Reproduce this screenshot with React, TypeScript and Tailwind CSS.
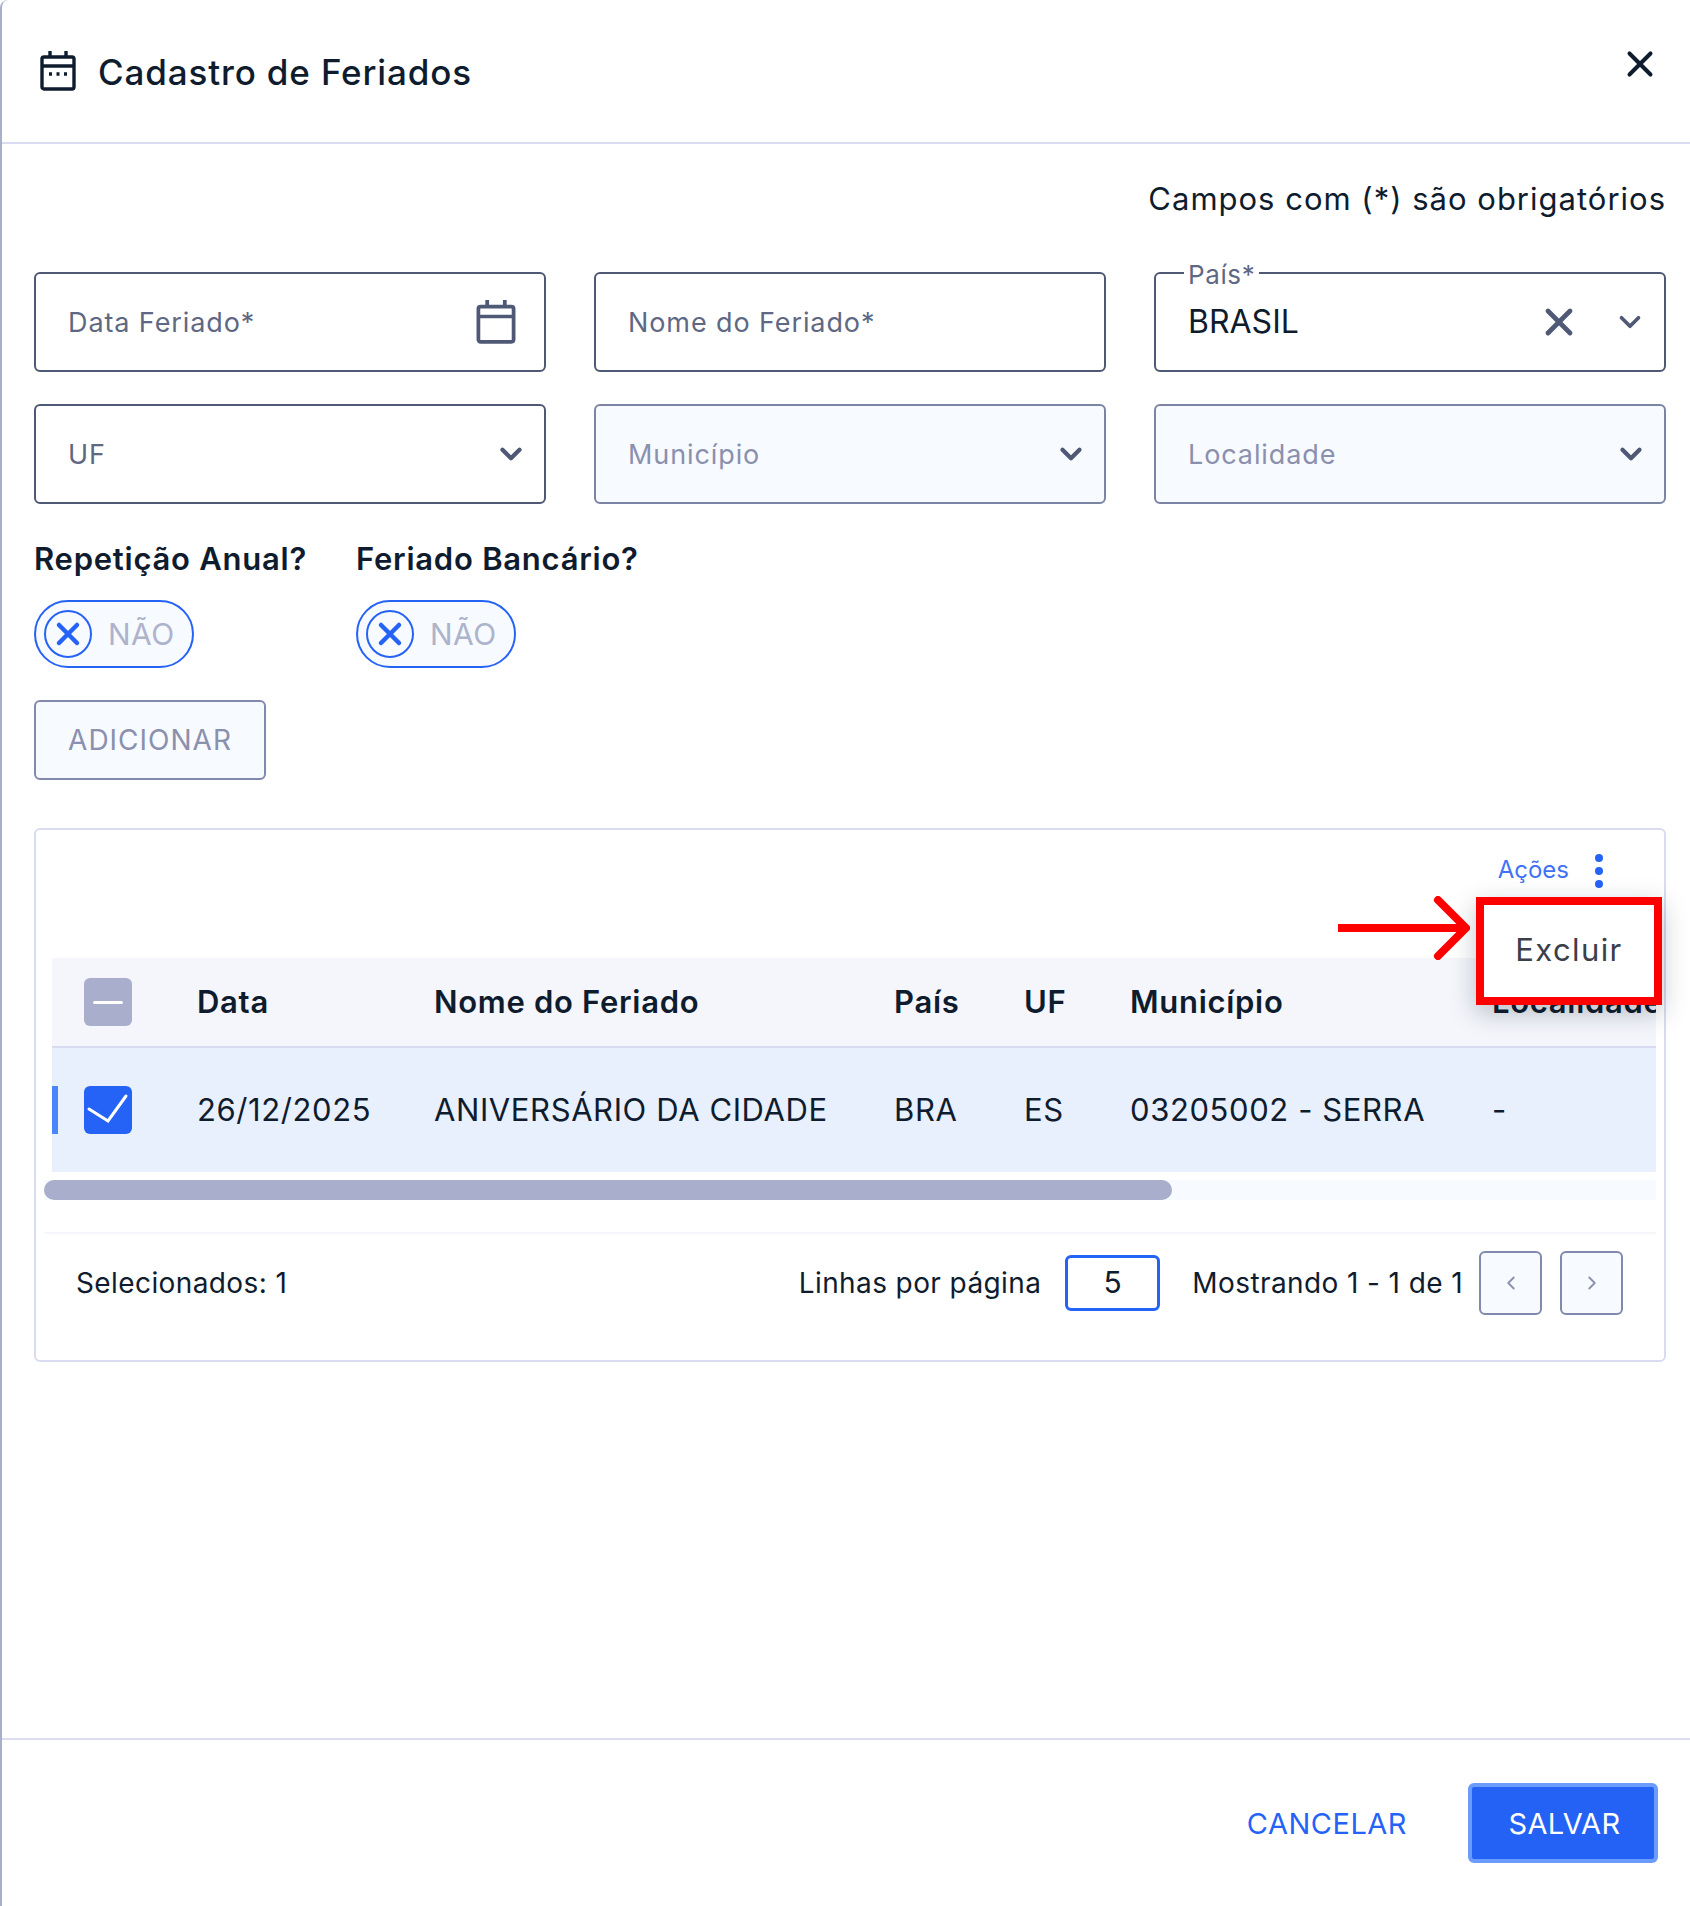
import React from "react";
import { ChevronDown, ChevronLeft, ChevronRight, X } from "lucide-react";

const FONT = "font-['Inter',sans-serif]";

function CalendarIcon({ className, dots }: { className?: string; dots?: boolean }) {
  return (
    <svg viewBox="0 0 36 40" fill="none" stroke="currentColor" strokeWidth="3.4" className={className}>
      <rect x="2" y="6" width="32" height="32" rx="2" />
      <path d="M2 15h32M10 0v6M26 0v6" />
      {dots && <path d="M9 23h3M16.5 23h3M24 23h3" />}
    </svg>
  );
}

function Field({ label, disabled, icon }: { label: string; disabled?: boolean; icon?: React.ReactNode }) {
  return (
    <div
      className={`flex h-[100px] items-center justify-between rounded-md border-2 pl-[32px] pr-[20px] text-[27px] tracking-[0.9px] ${
        disabled
          ? "border-[#7c84a5] bg-[#f7faff] text-[#8a90ad]"
          : "border-[#4f5875] bg-white text-[#5f6883]"
      }`}
    >
      <span className="mt-[2px]">{label}</span>
      {icon}
    </div>
  );
}

function Chevron() {
  return <ChevronDown strokeWidth={3} className="h-[34px] w-[34px] -mr-[4px] text-[#4f5875]" />;
}

function Toggle() {
  return (
    <div className="flex h-[68px] w-[160px] items-center rounded-[34px] border-2 border-[#2563f6] bg-[#f7faff] pl-[8px]">
      <div className="flex h-[48px] w-[48px] items-center justify-center rounded-full border-2 border-[#2563f6]">
        <X strokeWidth={3} className="h-[36px] w-[36px] text-[#2563f6]" />
      </div>
      <span className="ml-[16px] text-[30px] tracking-[0.5px] text-[#aeb3cc]">NÃO</span>
    </div>
  );
}

function PageButton({ children }: { children: React.ReactNode }) {
  return (
    <div className="flex h-[64px] w-[63px] items-center justify-center rounded-md border-2 border-[#8189ac] bg-[#f7faff] text-[#8a90ad]">
      {children}
    </div>
  );
}

const columns = [
  { title: "Data", value: "26/12/2025", width: "w-[237px]" },
  { title: "Nome do Feriado", value: "ANIVERSÁRIO DA CIDADE", width: "w-[460px]" },
  { title: "País", value: "BRA", width: "w-[130px]" },
  { title: "UF", value: "ES", width: "w-[106px]" },
  { title: "Município", value: "03205002 - SERRA", width: "w-[362px]" },
  { title: "Localidade", value: "-", width: "w-[164px]" },
];

export default function App() {
  return (
    <div className={`${FONT} flex h-[1906px] w-[1690px] flex-col overflow-hidden rounded-tl-lg border-l-2 border-[#a8aecb] bg-white text-[#0f1c2e]`}>
      <header className="flex h-[144px] shrink-0 items-center justify-between border-b-2 border-[#d9dcf0] pl-[38px] pr-[29px]">
        <div className="flex items-center gap-[22px]">
          <CalendarIcon dots className="h-[40px] w-[36px]" />
          <h1 className="mt-[2px] text-[35px] font-medium tracking-[0.85px]">Cadastro de Feriados</h1>
        </div>
        <X strokeWidth={2.3} className="mb-[14px] h-[42px] w-[42px]" />
      </header>

      <main className="flex-1 pl-[32px] pr-[24px]">
        <p className="mt-[35px] text-right text-[31px] leading-[40px] tracking-[1px]">Campos com (*) são obrigatórios</p>

        <div className="mt-[53px] grid grid-cols-3 gap-x-[48px] gap-y-[32px]">
          <Field label="Data Feriado*" icon={<CalendarIcon className="mr-[8px] h-[44px] w-[40px] text-[#4f5875]" />} />
          <Field label="Nome do Feriado*" />
          <div className="relative flex h-[100px] items-center justify-between rounded-md border-2 border-[#4f5875] pl-[32px] pr-[20px] text-[32px]">
            <span className="absolute left-[28px] -top-[13px] bg-white px-[4px] text-[26px] leading-[28px] tracking-[0.6px] text-[#5f6883]">País*</span>
            <span>BRASIL</span>
            <div className="flex items-center gap-[32px]">
              <X strokeWidth={2.6} className="h-[44px] w-[44px] text-[#4f5875]" />
              <ChevronDown strokeWidth={2.6} className="h-[34px] w-[34px] -mr-[3px] text-[#4f5875]" />
            </div>
          </div>
          <Field label="UF" icon={<Chevron />} />
          <Field label="Município" disabled icon={<Chevron />} />
          <Field label="Localidade" disabled icon={<Chevron />} />
        </div>

        <div className="mt-[35px] flex gap-[49px]">
          <div>
            <div className="text-[31px] font-semibold leading-[40px] tracking-[0.75px]">Repetição Anual?</div>
            <div className="mt-[21px]"><Toggle /></div>
          </div>
          <div>
            <div className="text-[31px] font-semibold leading-[40px] tracking-[0.75px]">Feriado Bancário?</div>
            <div className="mt-[21px]"><Toggle /></div>
          </div>
        </div>

        <button className="mt-[32px] block h-[80px] w-[232px] rounded-md border-2 border-[#8189ac] bg-[#f7faff] text-[28px] tracking-[1px] text-[#8a90ad]">
          ADICIONAR
        </button>

        <section className="relative mt-[48px] h-[534px] rounded-md border-2 border-[#d9dcf0] pl-[8px] pr-[8px]">
          <div className="flex h-[128px] items-start justify-end pr-[53px] pt-[23px]">
            <span className="mr-[26px] -mt-[1px] text-[24px] text-[#3f72f7]">Ações</span>
            <div className="flex h-[36px] flex-col justify-between py-[1px]">
              <span className="h-[8px] w-[8px] rounded-full bg-[#2563f6]" />
              <span className="h-[8px] w-[8px] rounded-full bg-[#2563f6]" />
              <span className="h-[8px] w-[8px] rounded-full bg-[#2563f6]" />
            </div>
          </div>

          <div className="ml-[8px] overflow-hidden">
            <div className="flex h-[90px] w-[1604px] items-center border-b-2 border-[#d9dcf0] bg-[#f4f6fb] text-[31px] font-semibold tracking-[0.7px]">
              <div className="w-[145px] shrink-0 pl-[32px]">
                <div className="flex h-[48px] w-[48px] items-center justify-center rounded-md bg-[#a8aecb]">
                  <span className="h-[3px] w-[30px] rounded bg-white" />
                </div>
              </div>
              {columns.map((c) => (
                <div key={c.title} className={`${c.width} shrink-0 whitespace-nowrap`}>{c.title}</div>
              ))}
            </div>
            <div className="relative flex h-[124px] w-[1604px] items-center bg-[#e8effd] text-[31px] tracking-[0.6px]">
              <span className="absolute left-0 top-[38px] h-[48px] w-[6px] bg-[#4a85fb]" />
              <div className="w-[145px] shrink-0 pl-[32px]">
                <div className="flex h-[48px] w-[48px] items-center justify-center rounded-md bg-[#2563f6]">
                  <svg viewBox="0 0 48 48" className="h-[48px] w-[48px]" fill="none" stroke="white" strokeWidth="3" strokeLinecap="round">
                    <path d="M5 23l19 12L42 10" />
                  </svg>
                </div>
              </div>
              {columns.map((c) => (
                <div key={c.title} className={`${c.width} shrink-0 whitespace-nowrap`}>{c.value}</div>
              ))}
            </div>
          </div>

          <div className="mt-[8px] h-[20px] bg-[#f7faff]">
            <div className="h-full w-[1128px] rounded-[10px] bg-[#a8aecb]" />
          </div>

          <div className="mt-[32px] flex h-[127px] items-center border-t-2 border-[#f4f6fb] pb-[28px] pl-[32px] pr-[33px] text-[28px] tracking-[0.4px]">
            <span>Selecionados: 1</span>
            <span className="ml-auto">Linhas por página</span>
            <div className="ml-[24px] flex h-[56px] w-[95px] items-center justify-center rounded-md border-[3px] border-[#2563f6] text-[30px]">5</div>
            <span className="ml-[32px] mr-[16px]">Mostrando 1 - 1 de 1</span>
            <div className="flex gap-[18px]">
              <PageButton><ChevronLeft className="h-[22px] w-[22px]" /></PageButton>
              <PageButton><ChevronRight className="h-[22px] w-[22px]" /></PageButton>
            </div>
          </div>

          {/* menu aberto + marcacao vermelha */}
          <div className="absolute right-[2px] top-[67px] flex h-[108px] w-[186px] items-center justify-center border-[8px] border-[#ff0000] bg-white pb-[2px] text-[31px] tracking-[1.4px] text-[#3a3f4a] shadow-[0_8px_24px_rgba(15,28,46,0.25)]">
            Excluir
          </div>
          <svg viewBox="0 0 132 64" fill="none" stroke="#ff0000" strokeWidth="8" strokeLinecap="round" strokeLinejoin="round" className="absolute left-[1302px] top-[66px] h-[64px] w-[132px]">
            <path d="M0 32h126" strokeLinecap="butt" />
            <path d="M100 4l28 28-28 28" />
          </svg>
        </section>
      </main>

      <footer className="flex h-[168px] shrink-0 items-center justify-end border-t-2 border-[#dcdcf2] pr-[32px]">
        <span className="mr-[61px] mt-[2px] text-[29px] tracking-[0.5px] text-[#2563f6]">CANCELAR</span>
        <button className="h-[80px] w-[190px] rounded-md border-4 border-[#6b9bfb] bg-[#2462f6] pl-[3px] pt-[2px] text-[29px] tracking-[0.4px] text-white">SALVAR</button>
      </footer>
    </div>
  );
}
